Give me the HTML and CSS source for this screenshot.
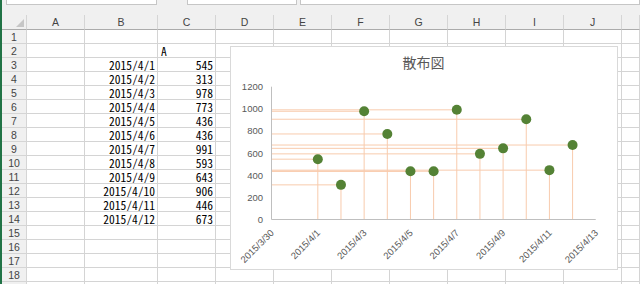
FILE: index.html
```html
<!DOCTYPE html>
<html lang="ja">
<head>
    <meta charset="UTF-8">
    <title>散布図</title>
    <link rel="stylesheet" href="styles.css">
</head>
<body>
    <div class="app">
        <div class="toolbar">
            <div class="namebox"></div>
            <div class="fxbox"></div>
            <div class="formula"></div>
        </div>
        <div class="sheet" id="sheet"></div>
        <div class="chart">
            <svg id="chart" width="386" height="222"></svg>
        </div>
    </div>

    <script>
        const dates = ['2015/4/1', '2015/4/2', '2015/4/3', '2015/4/4', '2015/4/5', '2015/4/6',
            '2015/4/7', '2015/4/8', '2015/4/9', '2015/4/10', '2015/4/11', '2015/4/12'];
        const values = [545, 313, 978, 773, 436, 436, 991, 593, 643, 906, 446, 673];
        const cols = ['A', 'B', 'C', 'D', 'E', 'F', 'G', 'H', 'I', 'J', ''];

        // Build the sheet grid
        function cell(cls, text) {
            const el = document.createElement('div');
            el.className = cls;
            if (text !== undefined) el.textContent = text;
            return el;
        }

        const sheet = document.getElementById('sheet');
        const corner = cell('corner');
        corner.appendChild(cell('select-all'));
        sheet.appendChild(corner);
        cols.forEach(c => sheet.appendChild(cell('col-head', c)));

        // row 19 only peeks in at the bottom edge, so it gets no number
        for (let r = 1; r <= 19; r++) {
            sheet.appendChild(cell('row-head', r < 19 ? r : ''));
            cols.forEach(c => {
                let text = '';
                let cls = 'cell';
                if (r === 2 && c === 'C') text = 'A';
                if (r >= 3 && r <= 14 && c === 'B') { text = dates[r - 3]; cls += ' num'; }
                if (r >= 3 && r <= 14 && c === 'C') { text = values[r - 3]; cls += ' num'; }
                sheet.appendChild(cell(cls, text));
            });
        }

        // Scatter chart
        const svg = document.getElementById('chart');
        const NS = 'http://www.w3.org/2000/svg';
        const axisX = 40.5;
        const baseY = 172.5;
        const dayW = 23.16;
        const unit = (172.5 - 39.7) / 1200;

        function add(tag, attrs, text) {
            const el = document.createElementNS(NS, tag);
            for (const k in attrs) el.setAttribute(k, attrs[k]);
            if (text !== undefined) el.textContent = text;
            svg.appendChild(el);
            return el;
        }

        add('text', { x: 192.5, y: 21, class: 'title', 'text-anchor': 'middle' }, '散布図');

        for (let v = 0; v <= 1200; v += 200) {
            add('text', { x: 32, y: baseY - v * unit + 3.5, class: 'tick', 'text-anchor': 'end' }, v);
        }

        const xLabels = ['2015/3/30', '2015/4/1', '2015/4/3', '2015/4/5', '2015/4/7',
            '2015/4/9', '2015/4/11', '2015/4/13'];
        xLabels.forEach((label, i) => {
            const tx = axisX + dayW * i * 2 + 3;
            const ty = baseY + 14;
            add('text', { x: tx, y: ty, class: 'tick', 'text-anchor': 'end',
                transform: `rotate(-45 ${tx} ${ty})` }, label);
        });

        // error bars back to both axes
        values.forEach((v, i) => {
            const px = axisX + dayW * (i + 2);
            const py = baseY - v * unit;
            add('line', { x1: axisX, y1: py, x2: px, y2: py, class: 'bar' });
            add('line', { x1: px, y1: py, x2: px, y2: baseY, class: 'bar' });
        });

        add('line', { x1: axisX, y1: 39.7, x2: axisX, y2: baseY, class: 'axis' });
        add('line', { x1: axisX, y1: baseY, x2: axisX + dayW * 14, y2: baseY, class: 'axis' });

        values.forEach((v, i) => {
            add('circle', { cx: axisX + dayW * (i + 2), cy: baseY - v * unit, r: 5, class: 'dot' });
        });
    </script>
</body>
</html>
```

FILE: styles.css
```css
body {
    margin: 0;
    overflow: hidden;
    background-color: #fff;
}

.app {
    position: relative;
    height: 284px;
    overflow: hidden;
    border-left: 2px solid #217346;
    font-family: "Liberation Sans", Arial, sans-serif;
}

.toolbar {
    display: flex;
    align-items: flex-start;
    height: 15px;
    background-color: #f0f0f0;
}

.namebox,
.fxbox,
.formula {
    height: 4px;
    background: #fff;
    border: 1px solid #c6c6c6;
    border-top: none;
}

.namebox {
    width: 149px;
    margin-left: 4px;
}

.fxbox {
    width: 108px;
    margin-left: 30px;
}

.formula {
    flex: 1;
    margin-left: 3px;
}

.sheet {
    display: grid;
    grid-template-columns: 25px 58px 73px repeat(8, 58px) 1fr;
    grid-template-rows: 15px;
    grid-auto-rows: 14px;
}

.corner,
.col-head {
    background-color: #f0f0f0;
    border-right: 1px solid #d5d5d5;
    border-bottom: 1px solid #ababab;
}

.corner {
    display: flex;
    justify-content: flex-end;
    align-items: flex-end;
    padding: 0 2px 2px 0;
}

.select-all {
    width: 0;
    height: 0;
    border-left: 8px solid transparent;
    border-bottom: 8px solid #c6c6c6;
}

.col-head {
    font-size: 10.5px;
    line-height: 14px;
    text-align: center;
    color: #444;
}

.row-head {
    background-color: #f0f0f0;
    border-right: 1px solid #d5d5d5;
    border-bottom: 1px solid #d5d5d5;
    font-size: 10.5px;
    line-height: 13px;
    padding-top: 1px;
    text-align: center;
    color: #444;
}

.cell {
    border-right: 1px solid #d4d4d4;
    border-bottom: 1px solid #d4d4d4;
    padding: 0 2px 0 3px;
    font-family: "Noto Sans Mono CJK JP", "Noto Sans CJK JP", monospace;
    font-size: 11.5px;
    line-height: 14px;
    color: #000;
    white-space: nowrap;
    overflow: hidden;
}

.num {
    text-align: right;
}

.chart {
    position: absolute;
    left: 228px;
    top: 46px;
    width: 388px;
    height: 224px;
    box-sizing: border-box;
    border: 1px solid #d9d9d9;
    background: #fff;
}

.chart svg {
    display: block;
}

.title {
    font-family: "Noto Sans CJK JP", sans-serif;
    font-size: 14px;
    fill: #595959;
}

.tick {
    font-family: "Liberation Sans", Arial, sans-serif;
    font-size: 9.5px;
    fill: #595959;
}

.bar {
    stroke: #f8cbad;
    stroke-width: 1;
}

.axis {
    stroke: #bfbfbf;
    stroke-width: 1;
}

.dot {
    fill: #548235;
}
```
